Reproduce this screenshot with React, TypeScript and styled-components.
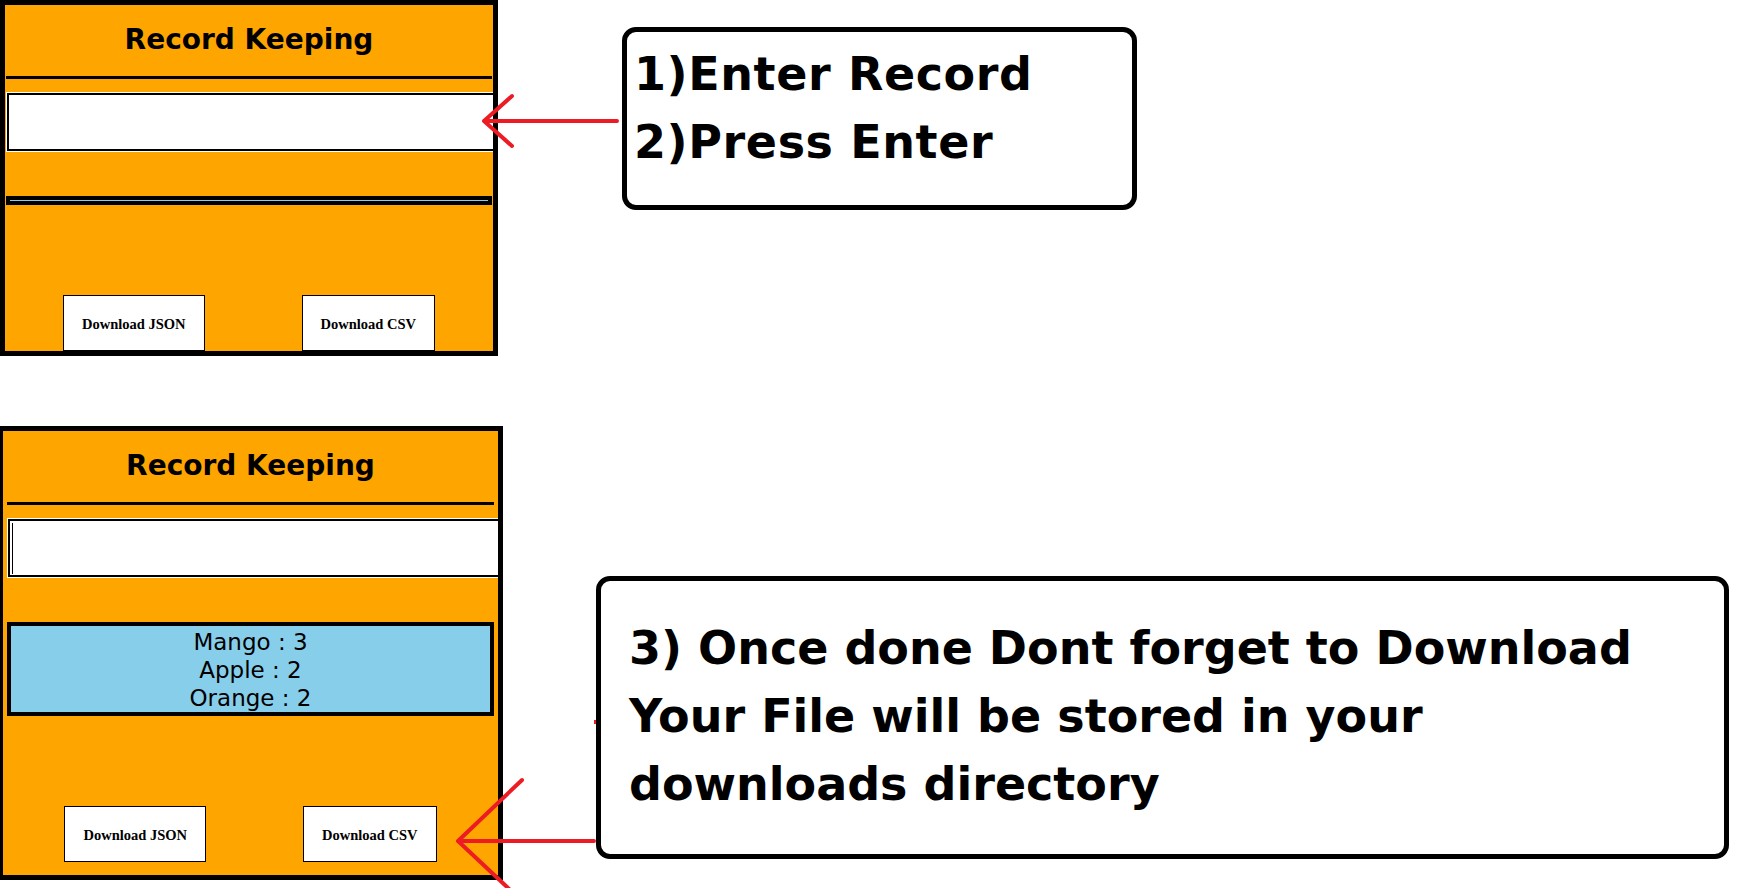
import React from 'react';
import styled, { createGlobalStyle } from 'styled-components';

const GlobalStyle = createGlobalStyle`
  html, body {
    margin: 0;
    padding: 0;
    background: #ffffff;
  }
`;

const Page = styled.div`
  position: relative;
  width: 1752px;
  height: 888px;
  overflow: hidden;
  display: flex;
  flex-direction: column;
`;

const Row = styled.div<{ $top: number }>`
  display: flex;
  align-items: flex-start;
  margin-top: ${p => p.$top}px;
`;

// The orange "Record Keeping" app panel
const Panel = styled.section<{ $width: number; $shift: number; $bottomGap: number }>`
  box-sizing: border-box;
  flex-shrink: 0;
  width: ${p => p.$width}px;
  margin-left: ${p => p.$shift}px;
  border: 5px solid #000;
  background-color: #ffa500;
  padding-bottom: ${p => p.$bottomGap}px;
  overflow: hidden;
  display: flex;
  flex-direction: column;
`;

const Title = styled.h2`
  margin: 0;
  padding-top: 18px;
  font: 700 28px/33px "DejaVu Sans", Verdana, sans-serif;
  color: #000;
  text-align: center;
`;

const Rule = styled.div<{ $inset: number }>`
  height: 3px;
  margin: 20px ${p => p.$inset}px 0;
  background-color: #000;
`;

const InputWrap = styled.div<{ $inset: number }>`
  position: relative;
  flex-shrink: 0;
  width: calc(100% + 20px);
  height: 58px;
  margin: 14px 0 0 ${p => p.$inset + 1}px;
`;

const RecordInput = styled.input`
  box-sizing: border-box;
  display: block;
  width: 100%;
  height: 100%;
  margin: 0;
  padding: 0 4px;
  border: 2px solid #000;
  box-shadow: 0 0 0 1px #fff;
  background: #fff;
  outline: none;
  font: 22px "DejaVu Sans", sans-serif;
`;

const Caret = styled.span`
  position: absolute;
  left: 4px;
  top: 4px;
  bottom: 3px;
  width: 1px;
  background-color: #000;
`;

const ItemList = styled.div<{ $inset: number; $filled: boolean }>`
  min-height: 1px;
  margin: 45px ${p => p.$inset}px 0;
  padding: ${p => (p.$filled ? '2px 0 0' : '0')};
  border: 4px solid #000;
  background-color: #87ceeb;
  font: 23px/28px "DejaVu Sans", Verdana, sans-serif;
  color: #000;
  text-align: center;
`;

const ButtonRow = styled.div`
  display: flex;
  justify-content: center;
  gap: 97px;
  margin-top: 90px;
`;

const DownloadButton = styled.button`
  box-sizing: border-box;
  height: 56px;
  padding: 2px 18px 0;
  border: 1px solid #000;
  border-radius: 0;
  background-color: #fff;
  color: #000;
  font: 700 14.5px "Liberation Serif", "Times New Roman", serif;
  cursor: pointer;
`;

// Instruction bubbles
const Callout = styled.div<{ $w: number; $h: number; $left: number; $top: number; $padTop: number; $padLeft: number; $spacing: number }>`
  box-sizing: border-box;
  flex-shrink: 0;
  width: ${p => p.$w}px;
  height: ${p => p.$h}px;
  margin-left: ${p => p.$left}px;
  margin-top: ${p => p.$top}px;
  padding: ${p => p.$padTop}px 0 0 ${p => p.$padLeft}px;
  border: 5px solid #000;
  border-radius: 14px;
  background-color: #fff;
  font: 700 46px/68px "DejaVu Sans", Verdana, sans-serif;
  letter-spacing: ${p => p.$spacing}px;
  color: #000;
  white-space: nowrap;
`;

const Step = styled.div``;

const Arrows = styled.svg`
  position: absolute;
  top: 0;
  left: 0;
  pointer-events: none;
`;

interface RecordPanelProps {
  width: number;
  shift: number;
  inset: number;
  bottomGap: number;
  items: { name: string; count: number }[];
  focused?: boolean;
}

const RecordPanel: React.FC<RecordPanelProps> = ({ width, shift, inset, bottomGap, items, focused }) => (
  <Panel $width={width} $shift={shift} $bottomGap={bottomGap}>
    <Title>Record Keeping</Title>
    <Rule $inset={inset} />
    <InputWrap $inset={inset}>
      <RecordInput type="text" />
      {focused && <Caret />}
    </InputWrap>
    <ItemList $inset={inset} $filled={items.length > 0}>
      {items.map(item => (
        <div key={item.name}>
          {item.name} : {item.count}
        </div>
      ))}
    </ItemList>
    <ButtonRow>
      <DownloadButton>Download JSON</DownloadButton>
      <DownloadButton>Download CSV</DownloadButton>
    </ButtonRow>
  </Panel>
);

const fruits = [
  { name: 'Mango', count: 3 },
  { name: 'Apple', count: 2 },
  { name: 'Orange', count: 2 },
];

const App: React.FC = () => (
  <>
    <GlobalStyle />
    <Page>
      <Row $top={0}>
        <RecordPanel width={498} shift={0} inset={1} bottomGap={0} items={[]} />
        <Callout $w={515} $h={183} $left={124} $top={27} $padTop={8} $padLeft={7} $spacing={0.6}>
          <Step>1)Enter Record</Step>
          <Step>2)Press Enter</Step>
        </Callout>
      </Row>
      <Row $top={70}>
        <RecordPanel width={505} shift={-2} inset={4} bottomGap={13} items={fruits} focused />
        <Callout $w={1133} $h={283} $left={93} $top={150} $padTop={33} $padLeft={28} $spacing={0}>
          <Step>3) Once done Dont forget to Download</Step>
          <Step>Your File will be stored in your</Step>
          <Step>downloads directory</Step>
        </Callout>
      </Row>
      <Arrows width={1752} height={888} viewBox="0 0 1752 888">
        <g stroke="#ed1c24" strokeWidth={4} strokeLinecap="round" strokeLinejoin="round" fill="none">
          <path d="M617 121 H484 M512 96 L484 121 L512 146" />
          <path d="M594 841 H458 M522 780 L458 841 L524 903" />
        </g>
        <rect x={594} y={720} width={2} height={4} fill="#ed1c24" />
      </Arrows>
    </Page>
  </>
);

export default App;
